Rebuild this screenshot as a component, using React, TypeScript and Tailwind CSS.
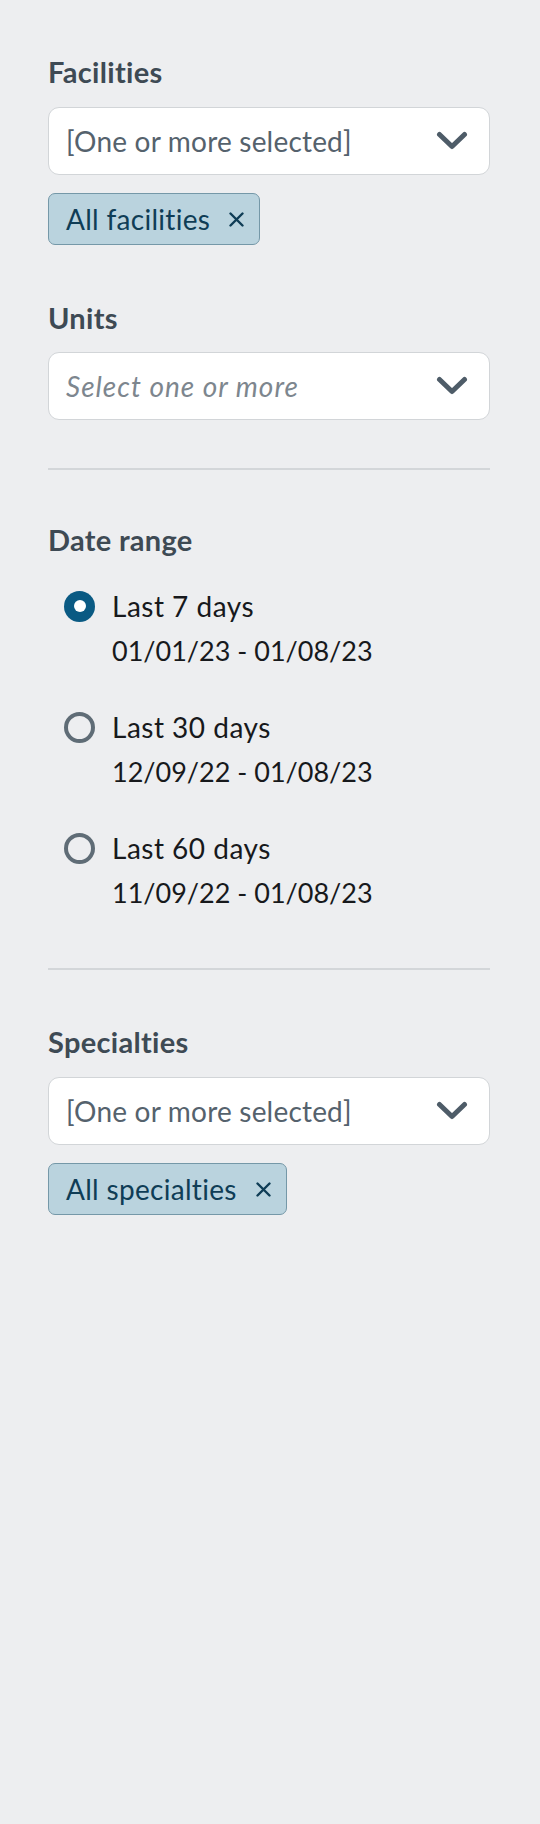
import React, { useState } from "react";

const FONT = { fontFamily: "Lato, 'Noto Sans', 'Liberation Sans', sans-serif" };

const Chevron = () => (
  <svg width="32" height="20" viewBox="0 0 32 20" fill="none">
    <path d="M3.5 3.5 L16 15.5 L28.5 3.5" stroke="#4e5c68" strokeWidth="5" strokeLinecap="round" strokeLinejoin="round" />
  </svg>
);

const Select = ({ text, placeholder }: { text: string; placeholder?: boolean }) => (
  <div className="flex h-[68px] items-center justify-between rounded-[11px] border-[1.5px] border-[#d2d5d8] bg-white pl-[17px] pr-[21px]">
    <span
      className={
        placeholder
          ? "text-[28px] italic tracking-[1px] text-[#7d868e]"
          : "text-[28px] tracking-[0.2px] text-[#55626d]"
      }
    >
      {text}
    </span>
    <Chevron />
  </div>
);

const Chip = ({ label }: { label: string }) => (
  <div className="mt-[18px] flex h-[52px] w-fit items-center gap-[19px] rounded-[7px] border-[1.5px] border-[#7598a8] bg-[#bad3de] pl-[17px] pr-[15px]">
    <span className="text-[28px] tracking-[0.3px] text-[#0f3d56]">{label}</span>
    <svg width="15" height="15" viewBox="0 0 15 15">
      <path d="M1.5 1.5 L13.5 13.5 M13.5 1.5 L1.5 13.5" stroke="#0f3d56" strokeWidth="2.4" strokeLinecap="round" />
    </svg>
  </div>
);

const Label = ({ children }: { children: React.ReactNode }) => (
  <div className="text-[29px] font-bold leading-[36px] tracking-[0.3px] text-[#3e4a54]">{children}</div>
);

const ranges = [
  { label: "Last 7 days", dates: "01/01/23 - 01/08/23" },
  { label: "Last 30 days", dates: "12/09/22 - 01/08/23" },
  { label: "Last 60 days", dates: "11/09/22 - 01/08/23" },
];

export default function App() {
  const [range, setRange] = useState(0);

  return (
    <div style={FONT} className="min-h-screen bg-[#edeef0] pl-[48px] pr-[50px] pt-[54px]">
      {/* Facilities */}
      <Label>Facilities</Label>
      <div className="mt-[17px]">
        <Select text="[One or more selected]" />
      </div>
      <Chip label="All facilities" />

      {/* Units */}
      <div className="mt-[55px]">
        <Label>Units</Label>
      </div>
      <div className="mt-[16px]">
        <Select text="Select one or more" placeholder />
      </div>

      <div className="mt-[48px] h-[2px] bg-[#d3d6d9]" />

      {/* Date range */}
      <div className="mt-[52px]">
        <Label>Date range</Label>
      </div>
      <div className="mt-[26px] flex flex-col gap-[31px]">
        {ranges.map((r, i) => (
          <button key={r.label} onClick={() => setRange(i)} className="flex items-start gap-[17px] pl-[16px] text-left">
            <span className="flex h-[44px] items-center">
              {range === i ? (
                <span className="flex h-[31px] w-[31px] items-center justify-center rounded-full bg-[#0a5a83]">
                  <span className="h-[12px] w-[12px] rounded-full bg-white" />
                </span>
              ) : (
                <span className="h-[31px] w-[31px] rounded-full border-[4.5px] border-[#5f6c76]" />
              )}
            </span>
            <span className="flex flex-col text-[#17191c]">
              <span className="text-[28px] leading-[44px] tracking-[0.5px]">{r.label}</span>
              <span className="text-[27px] leading-[46px]">{r.dates}</span>
            </span>
          </button>
        ))}
      </div>

      <div className="mt-[52px] h-[2px] bg-[#d3d6d9]" />

      {/* Specialties */}
      <div className="mt-[54px]">
        <Label>Specialties</Label>
      </div>
      <div className="mt-[17px]">
        <Select text="[One or more selected]" />
      </div>
      <Chip label="All specialties" />
    </div>
  );
}
